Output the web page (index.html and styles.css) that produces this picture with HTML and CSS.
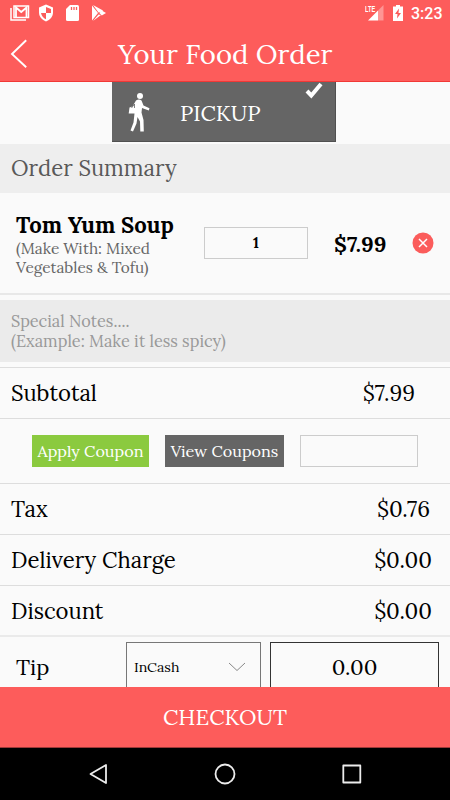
FILE: index.html
```html
<!DOCTYPE html>
<html lang="en">
<head>
<meta charset="utf-8">
<title>Your Food Order</title>
<link rel="stylesheet" href="styles.css">
</head>
<body>
<div class="screen">
  <header class="header">
    <div class="status">
      <svg class="status-left" viewBox="0 0 110 26" width="110" height="26">
        <path d="M11 8v12h15" fill="none" stroke="#fff" stroke-width="1.5"/>
        <rect x="14" y="6" width="14.5" height="11.5" fill="none" stroke="#fff" stroke-width="1.5"/>
        <path d="M16 17V7.500l5.250 4.500 5.250-4.500V17" fill="none" stroke="#fff" stroke-width="1.800"/>
        <path d="M46 4.500l7 3v5c0 4-3 7.500-7 9-4-1.500-7-5-7-9v-5z" fill="#fff"/>
        <path d="M46 7v6h-5c.5 3 2.400 5 5 6.300V13h5V9z" fill="#fb5c5b"/>
        <path d="M70 5h7.500q1.500 0 1.500 1.500v13q0 1.500-1.500 1.500h-10q-1.500 0-1.500-1.500V9z" fill="#fff"/>
        <path d="M71.500 7v3M74 7v3M76.500 7v3" stroke="#fb5c5b" stroke-width="1.300"/>
        <path d="M92 5.500v15l6-7.500zM93 5l10 5.500-2 1.500-2.500.5zM93 21l5.500-6.500 2 .5 1.500-.8z" fill="#fff"/>
        <path d="M99.300 13l2.500-2.500 4.200 2.500-4.200 2.500z" fill="#fff"/>
      </svg>
      <div class="status-right">
        <div class="network"><span class="lte">LTE</span>
          <svg viewBox="0 0 16 16" width="16" height="16"><path d="M15.500 0v15.500H10V5.500z" fill="#fff" opacity=".35"/><path d="M10 5.500v10H0z" fill="#fff"/></svg>
        </div>
        <svg class="battery" viewBox="0 0 10 16" width="10" height="16"><path d="M3 0h4v1.500h3V16H0V1.500h3z" fill="#fff"/><path d="M6 3.500L2 9h2.500L4 13.500 8 8H5.500z" fill="#fb5c5b"/></svg>
        <span class="clock">3:23</span>
      </div>
    </div>
    <div class="titlebar">
      <svg class="back" viewBox="0 0 18 30" width="18" height="30"><path d="M16.200 1.200L2 15l14.200 13.300" fill="none" stroke="#fff" stroke-width="1.900"/></svg>
      <h1 class="title">Your Food Order</h1>
    </div>
  </header>

  <main class="content">
    <div class="mode-row">
      <div class="mode">
        <svg class="walker" viewBox="0 0 22 40" width="22" height="40">
          <circle cx="12" cy="4" r="3" fill="#fff"/>
          <path d="M8 8.500Q11 6.500 13.500 8.500L15.500 13.500 21.500 16.300 20.800 18.500 14 16 13.500 20.500 15.500 28 15.800 39.500H12.300L12 29.500 9.500 25 8.500 31.500 5 39.500 2.500 38.500 5.500 30.500 6.500 21.500H.7L1.500 15.500 4.500 14.500z" fill="#fff"/>
          <path d="M3.500 16L6.500 12v4" fill="none" stroke="#656565" stroke-width=".8"/>
        </svg>
        <span class="mode-label">PICKUP</span>
        <svg class="check" viewBox="0 0 20 17" width="20" height="17"><path d="M3 9l4.300 4.500L17 2" fill="none" stroke="#fff" stroke-width="4"/></svg>
      </div>
    </div>

    <h2 class="summary">Order Summary</h2>

    <section class="item">
      <div class="item-info">
        <div class="item-name">Tom Yum Soup</div>
        <div class="item-note">(Make With: Mixed<br>Vegetables &amp; Tofu)</div>
      </div>
      <div class="quantity">1</div>
      <div class="item-price">$7.99</div>
      <svg class="remove" viewBox="0 0 22 22" width="22" height="22"><circle cx="11" cy="11" r="10.500" fill="#fb5c5b"/><path d="M7 7l8 8M15 7l-8 8" stroke="#fff" stroke-width="1.500"/></svg>
    </section>

    <div class="notes">Special Notes....<br>(Example: Make it less spicy)</div>

    <div class="row subtotal"><span>Subtotal</span><span>$7.99</span></div>
    <div class="coupons">
      <div class="button apply">Apply Coupon</div>
      <div class="button view">View Coupons</div>
      <div class="coupon-field"></div>
    </div>
    <div class="row tax"><span>Tax</span><span>$0.76</span></div>
    <div class="row"><span>Delivery Charge</span><span>$0.00</span></div>
    <div class="row discount"><span>Discount</span><span>$0.00</span></div>
    <div class="tip">
      <span class="tip-label">Tip</span>
      <div class="select"><span>InCash</span>
        <svg viewBox="0 0 18 10" width="18" height="10"><path d="M1 1l8 7.500L17 1" fill="none" stroke="#888" stroke-width="1"/></svg>
      </div>
      <div class="tip-value">0.00</div>
    </div>
  </main>

  <div class="checkout">CHECKOUT</div>
  <nav class="navbar">
    <svg viewBox="0 0 450 52" width="450" height="52" fill="none" stroke="#ececec" stroke-width="1.800" stroke-linejoin="round">
      <path d="M106 17v18L90.500 26z"/>
      <circle cx="225" cy="26" r="9.500"/>
      <rect x="343.300" y="17.500" width="17" height="17"/>
    </svg>
  </nav>
</div>
</body>
</html>
```
FILE: styles.css
```css
* { box-sizing: border-box; }
body {
  margin: 0;
  background: #fafafa;
  font-family: Lora, "Liberation Serif", serif;
  color: #000;
}
svg { display: block; flex: none; }
.screen {
  width: 450px;
  height: 800px;
  display: flex;
  flex-direction: column;
  overflow: hidden;
  white-space: nowrap;
}
.header {
  height: 82px;
  flex: none;
  background: #fd5c5b;
  border-bottom: 1px solid #f13836;
  color: #fff;
}
.status { height: 26px; display: flex; justify-content: space-between; }
.status-right { display: flex; padding: 5px 8px 0 0; }
.network { display: flex; position: relative; margin-right: 9px; }
.lte {
  position: absolute;
  left: -3px;
  top: 0;
  font: bold 9px/8px "Liberation Sans", sans-serif;
  transform: scaleX(.62);
  transform-origin: left;
}
.battery { margin-right: 8px; }
.clock { font: 500 16px/18px Roboto, sans-serif; width: 31px; }
.titlebar { height: 55px; display: flex; align-items: center; padding-left: 10px; }
.title {
  margin: 1px 0 0 90px;
  font-size: 27.5px;
  line-height: 36px;
  font-weight: 400;
}
.content { height: 605px; flex: none; overflow: hidden; }
.mode-row { height: 62px; display: flex; padding-left: 112px; }
.mode {
  width: 224px;
  height: 60px;
  background: #656565;
  border-right: 1px solid #505050;
  border-bottom: 1px solid #505050;
  display: flex;
  color: #fff;
}
.walker { margin: 10px 0 0 16px; }
.mode-label { margin: 18px 0 0 30px; font-size: 22px; line-height: 26px; width: 80px; }
.check { margin-left: 44px; }
.summary {
  margin: 0;
  height: 49px;
  padding-left: 11px;
  background: #eee;
  color: #595959;
  font-size: 22.1px;
  line-height: 49px;
  font-weight: 400;
}
.item { height: 102px; display: flex; border-bottom: 2px solid #e8e8e8; }
.item-info { width: 204px; padding: 18px 0 0 16px; }
.item-name { font-size: 22.1px; line-height: 28px; font-weight: 700; }
.item-note { font-size: 15.4px; line-height: 19px; color: #666; }
.quantity {
  width: 104px;
  height: 32px;
  margin-top: 34px;
  border: 1px solid #ccc;
  font-size: 14.5px;
  line-height: 30px;
  font-weight: 700;
  text-align: center;
}
.item-price { width: 78px; margin: 37px 0 0 26px; font-size: 22px; line-height: 28px; font-weight: 700; }
.remove { margin-top: 39px; }
.notes {
  height: 62px;
  margin: 5px 0;
  padding: 12px 11px;
  background: #ebebeb;
  color: #999;
  font-size: 16.3px;
  line-height: 19.5px;
}
.row {
  height: 51px;
  padding: 0 18px 0 11px;
  display: flex;
  justify-content: space-between;
  border-bottom: 1px solid #ddd;
  font-size: 22.1px;
  line-height: 50px;
}
.subtotal { height: 52px; padding-right: 35px; border-top: 1px solid #ddd; }
.tax { padding-right: 20px; }
.discount { border-bottom: 2px solid #eaeaea; }
.coupons {
  height: 65px;
  padding: 16px 32px 0;
  display: flex;
  gap: 16px;
  border-bottom: 1px solid #ddd;
}
.button { width: 117px; height: 32px; font-size: 16.2px; line-height: 32px; color: #fff; text-align: center; }
.apply { background: #8bca3f; }
.view { background: #656565; width: 119px; }
.coupon-field { width: 118px; height: 32px; border: 1px solid #ccc; }
.tip { height: 62px; display: flex; padding: 5px 0 0 16px; }
.tip-label { width: 110px; font-size: 22px; line-height: 50px; }
.select {
  width: 135px;
  height: 60px;
  padding: 0 14px 10px 7px;
  border: 1px solid #777;
  display: flex;
  align-items: center;
  justify-content: space-between;
  font-size: 14.2px;
}
.tip-value {
  width: 169px;
  height: 60px;
  margin-left: 9px;
  border: 1px solid #333;
  font-size: 22px;
  line-height: 49px;
  text-align: center;
}
.checkout {
  height: 61px;
  flex: none;
  background: #fd5c5b;
  border-bottom: 1px solid #9d3938;
  color: #fff;
  font-size: 22px;
  line-height: 61px;
  text-align: center;
}
.navbar { height: 52px; flex: none; background: #000; }
```
